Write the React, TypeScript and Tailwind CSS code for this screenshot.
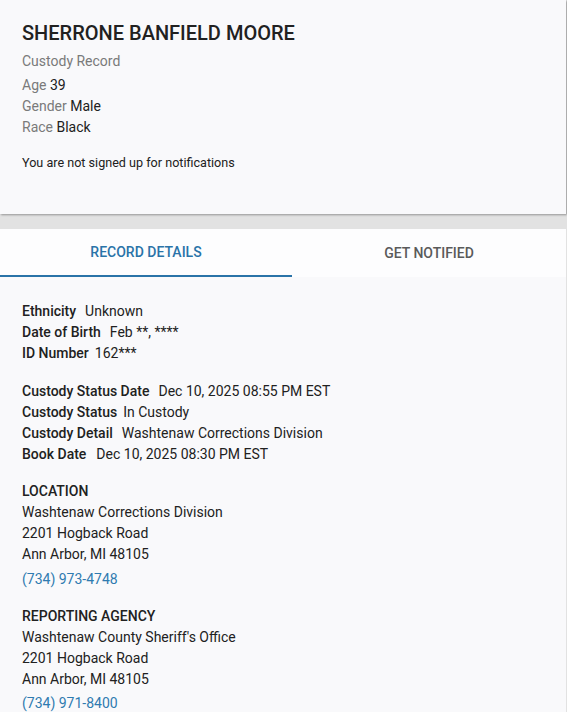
import React from "react";

const font = { fontFamily: "Roboto, 'Noto Sans', sans-serif" };

function Row({ label, value, gap = "ml-[9px]" }: { label: string; value: string; gap?: string }) {
  return (
    <div className="leading-[21px]">
      <span className="font-medium">{label}</span>
      <span className={gap}>{value}</span>
    </div>
  );
}

export default function App() {
  return (
    <div className="min-h-screen bg-[#e2e2e2] text-[#212121] text-[14px]" style={font}>
      <div className="w-[566px] bg-[#f9f9fb] px-[22px] pt-[19px] pb-[41px] shadow-[1px_1px_2px_rgba(0,0,0,0.35)]">
        <h1 className="text-[20px] leading-[28px] font-medium uppercase">Sherrone Banfield Moore</h1>
        <div className="mt-[4px] text-[#7a7a7a] leading-[21px]">Custody Record</div>
        <div className="mt-[3px] leading-[21px]">
          <span className="text-[#7a7a7a]">Age</span> 39
        </div>
        <div className="leading-[21px]">
          <span className="text-[#7a7a7a]">Gender</span> Male
        </div>
        <div className="leading-[21px]">
          <span className="text-[#7a7a7a]">Race</span> Black
        </div>
        <div className="mt-[15px] text-[12.6px] leading-[20px]">You are not signed up for notifications</div>
      </div>

      <div className="mt-[15px] w-[566px] bg-[#f9f9fb]">
        <div className="flex bg-[#fdfdfe] h-[48px]">
          <div className="w-[292px] flex items-center justify-center border-b-2 border-[#2a73a8] text-[#2a73a8] font-medium text-[14px] uppercase">
            Record Details
          </div>
          <div className="flex-1 flex items-center justify-center text-[#5a5a5a] font-medium text-[14px] uppercase">
            Get Notified
          </div>
        </div>

        <div className="px-[22px] pt-[24px] pb-[20px]">
          <Row label="Ethnicity" value="Unknown" />
          <Row label="Date of Birth" value="Feb **, ****" />
          <Row label="ID Number" value="162***" gap="ml-1.5" />

          <div className="mt-[17px]">
            <Row label="Custody Status Date" value="Dec 10, 2025 08:55 PM EST" />
            <Row label="Custody Status" value="In Custody" gap="ml-1.5" />
            <Row label="Custody Detail" value="Washtenaw Corrections Division" />
            <Row label="Book Date" value="Dec 10, 2025 08:30 PM EST" gap="ml-[10px]" />
          </div>

          <div className="mt-[16px] leading-[21px]">
            <div className="font-medium uppercase">Location</div>
            <div>Washtenaw Corrections Division</div>
            <div>2201 Hogback Road</div>
            <div>Ann Arbor, MI 48105</div>
            <div className="mt-[4px] text-[#2f7bb0]">(734) 973-4748</div>
          </div>

          <div className="mt-[16px] leading-[21px]">
            <div className="font-medium uppercase">Reporting Agency</div>
            <div>Washtenaw County Sheriff's Office</div>
            <div>2201 Hogback Road</div>
            <div>Ann Arbor, MI 48105</div>
            <div className="mt-[3px] text-[#2f7bb0]">(734) 971-8400</div>
          </div>
        </div>
      </div>
    </div>
  );
}
